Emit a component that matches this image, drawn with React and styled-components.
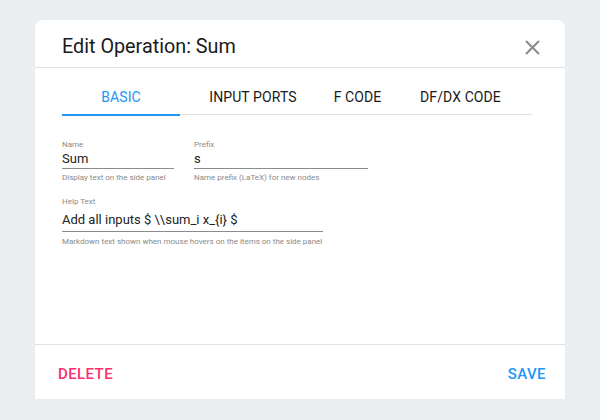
import React from "react";
import styled, { createGlobalStyle } from "styled-components";

const GlobalStyle = createGlobalStyle`
  html, body {
    margin: 0;
    padding: 0;
    background: #eaeef1;
    font-family: Roboto, "Liberation Sans", sans-serif;
  }
`;

const tabs = [
  { label: "Basic", width: 118 },
  { label: "Input Ports", width: 146 },
  { label: "F Code", width: 63 },
  { label: "df/dx Code", width: 143 },
];

const App = () => {
  return (
    <React.Fragment>
      <GlobalStyle />
      <Page>
        <Dialog>
          <Header>
            <Title>Edit Operation: Sum</Title>
            <CloseButton aria-label="close">
              <svg width="15" height="15" viewBox="0 0 15 15">
                <path
                  d="M1 1 L14 14 M14 1 L1 14"
                  stroke="#8a8a8a"
                  strokeWidth="2"
                  fill="none"
                />
              </svg>
            </CloseButton>
          </Header>

          <TabBar>
            {tabs.map((t, i) => (
              <Tab key={t.label} width={t.width} active={i === 0}>
                {t.label}
                {i === 0 && <Indicator />}
              </Tab>
            ))}
          </TabBar>

          <Body>
            <FieldRow>
              <Field width={112}>
                <Label>Name</Label>
                <Value>Sum</Value>
                <Helper>Display text on the side panel</Helper>
              </Field>
              <Field width={174}>
                <Label>Prefix</Label>
                <Value>s</Value>
                <Helper>Name prefix (LaTeX) for new nodes</Helper>
              </Field>
            </FieldRow>
            <FieldRow>
              <Field width={261}>
                <Label>Help Text</Label>
                <Value multiline>Add all inputs $ \\sum_i x_{"{i}"} $</Value>
                <Helper multiline>
                  Markdown text shown when mouse hovers on the items on the side
                  panel
                </Helper>
              </Field>
            </FieldRow>
          </Body>

          <Footer>
            <TextButton color="#fb2f6e">Delete</TextButton>
            <TextButton color="#2196f3">Save</TextButton>
          </Footer>
        </Dialog>
      </Page>
    </React.Fragment>
  );
};

export default App;

const Page = styled.div`
  width: 600px;
  height: 420px;
  padding: 20px 35px 21px;
  box-sizing: border-box;
`;

const Dialog = styled.div`
  height: 379px;
  background: #fff;
  border-radius: 8px 8px 0 0;
  display: flex;
  flex-direction: column;
`;

const Header = styled.div`
  display: flex;
  align-items: center;
  justify-content: space-between;
  padding: 15px 25px 8px 27px;
  border-bottom: 1px solid #e0e0e0;
`;

const Title = styled.h2`
  margin: 0;
  font-size: 19.8px;
  line-height: 24px;
  font-weight: 400;
  color: #1a1a1a;
`;

const CloseButton = styled.div`
  width: 15px;
  height: 15px;
  display: flex;
  margin-top: 1px;
`;

const TabBar = styled.div`
  display: flex;
  margin: 8px 33px 0 27px;
  border-bottom: 1px solid #e0e0e0;
`;

const Tab = styled.div`
  position: relative;
  width: ${(p) => p.width}px;
  flex: none;
  box-sizing: border-box;
  padding: 11px 0 7px;
  text-align: center;
  font-size: 14px;
  line-height: 20px;
  font-weight: 400;
  letter-spacing: 0.1px;
  text-transform: uppercase;
  white-space: nowrap;
  color: ${(p) => (p.active ? "#2196f3" : "#1a1a1a")};
`;

const Indicator = styled.span`
  position: absolute;
  left: 0;
  right: 0;
  bottom: -2px;
  height: 2px;
  background: #2196f3;
`;

const Body = styled.div`
  flex: 1;
  padding: 25px 27px 0;
  display: flex;
  flex-direction: column;
  gap: 14px;
`;

const FieldRow = styled.div`
  display: flex;
  gap: 20px;
`;

const Field = styled.div`
  width: ${(p) => p.width}px;
  display: flex;
  flex-direction: column;
`;

const Label = styled.div`
  font-size: 8px;
  line-height: 10px;
  color: #8a8a8a;
`;

const Value = styled.div`
  margin-top: ${(p) => (p.multiline ? "4px" : "1px")};
  font-size: 13px;
  line-height: ${(p) => (p.multiline ? "18px" : "16px")};
  color: #222;
  padding-bottom: ${(p) => (p.multiline ? "2px" : "1px")};
  border-bottom: 1px solid #8c8c8c;
  white-space: nowrap;
`;

const Helper = styled.div`
  margin-top: ${(p) => (p.multiline ? "5px" : "4px")};
  font-size: 8px;
  line-height: 10px;
  color: #8a8a8a;
  white-space: nowrap;
`;

const Footer = styled.div`
  display: flex;
  justify-content: space-between;
  padding: 19px 19px 15px 23px;
  border-top: 1px solid #e0e0e0;
`;

const TextButton = styled.div`
  font-size: 15px;
  line-height: 20px;
  font-weight: 500;
  letter-spacing: 0.4px;
  text-transform: uppercase;
  color: ${(p) => p.color};
`;
